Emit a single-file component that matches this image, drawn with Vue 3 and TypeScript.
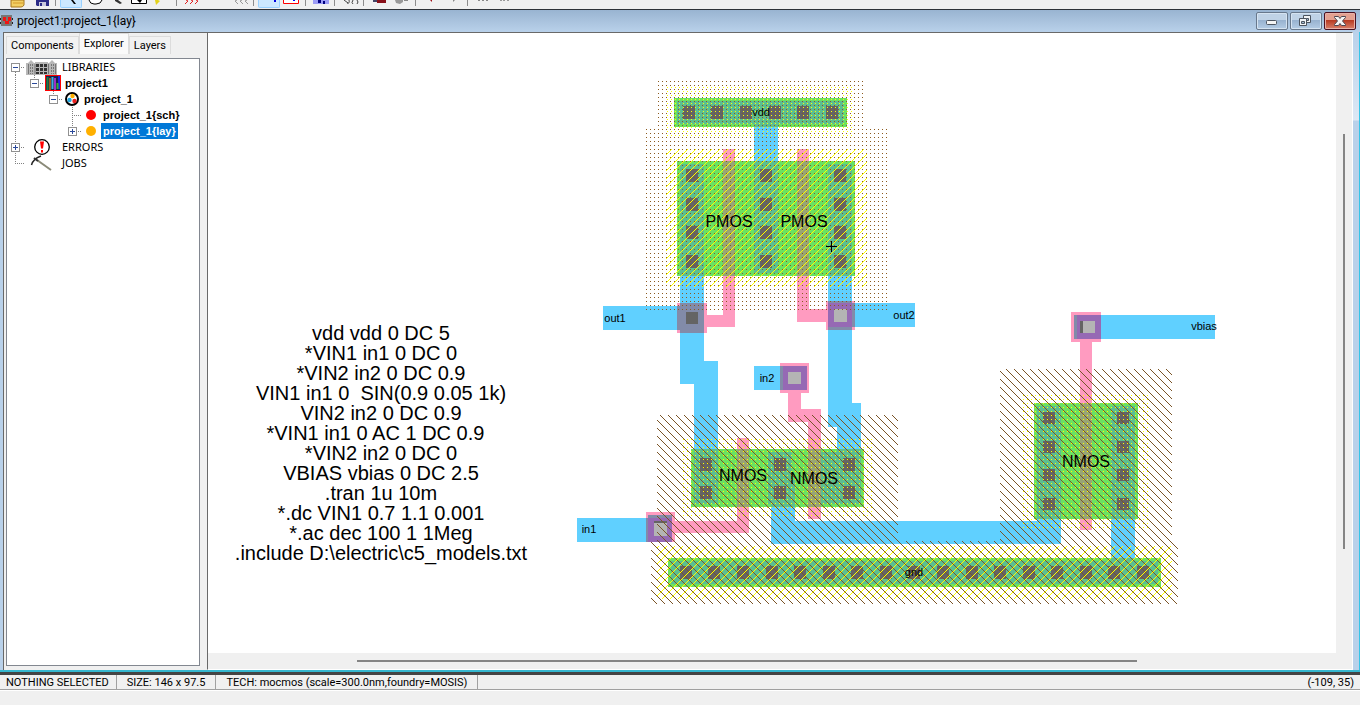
<script setup lang="ts">
import { ref } from 'vue'

interface Tool { name: string; w: number; sep?: boolean; on?: boolean; art?: string }
interface Row {
  id: string; label: string; gutter: number; box?: number; open?: boolean
  icon: string; iconW: number; bold?: boolean; lines: string
}
type Rect = [number, number, number, number]

const s = (w = 5): Tool => ({ name: '', w, sep: true })
const tools: Tool[] = [
  { name: 'Open library', w: 24, art: '<path d="M4 0h13v5q-1 2-3 2H4z" fill="#f2cf63" stroke="#a8761c"/><path d="M6 3h10" stroke="#d69a2a"/>' },
  { name: 'Save library', w: 23, art: '<path d="M5 0h13v6H6l-1-1z" fill="#2b2b86"/><path d="M8 2h7v4H8z" fill="#c9c9dd"/><path d="M9 3h2v3H9z" fill="#2b2b86"/>' },
  s(),
  { name: 'Click, zoom, wire', w: 25, on: true, art: '<path d="M10 0h2l3 4h-2z" fill="#000"/>' },
  { name: 'Pan', w: 23, art: '<path d="M5 0q1 4 5 4h2q5 0 6-4" fill="#fff" stroke="#000"/>' },
  { name: 'Zoom', w: 22, art: '<path d="M9 0h3l4 3-2 1-5-3z" fill="#333"/>' },
  { name: 'Outline', w: 22, art: '<path d="M3.500 0v3.500h15V0" fill="#fff" stroke="#000"/><path d="M9 0h5l-2 3z" fill="#000"/>' },
  { name: 'Measure', w: 24, art: '<path d="M4 0h3l2 1-4 4z" fill="#e3d21a"/>' },
  s(),
  { name: 'Objects', w: 25, art: '<path d="M5 0l2 1-3 3M10 0l2 1-3 3M15 0l2 1-3 3" fill="none" stroke="#e02020"/>' },
  { name: 'Grid', w: 24 },
  { name: 'Area', w: 23, art: '<path d="M8 0l-2 1 3 3M13 0l-2 1 3 3M18 0l-2 1 3 3" fill="none" stroke="#999"/>' },
  s(),
  { name: 'Select objects', w: 25, on: true, art: '<path d="M15 0h2v2h-2z" fill="#0000e0"/>' },
  { name: 'Select area', w: 22, art: '<path d="M2.500 0v3.500h15V0" fill="#fff" stroke="#f00"/><path d="M12 0h2v1h-2z" fill="#00f"/>' },
  s(),
  { name: 'Special select', w: 24, art: '<path d="M4 0h16v4H4z" fill="#9c9cf5"/><path d="M9 0h3v3H9zM14 1h2v3h-2z" fill="#000080"/>' },
  s(),
  { name: 'Preferences', w: 24, art: '<path d="M6 0l4 3M11 0q1 4-2 3M15 0q-2 3 0 4M19 0q2 2 0 4" fill="none" stroke="#444"/>' },
  s(),
  { name: 'Undo', w: 24, art: '<path d="M6 0h5v2H6z" fill="#446"/><path d="M10 0h9v3h-9z" fill="#880f18"/>' },
  { name: 'Redo', w: 23, art: '<path d="M4 0h8v2l-3 2-4-1z" fill="#999"/><path d="M13 0h4v1h-4z" fill="#888"/>' },
  s(),
  { name: 'Back', w: 24, art: '<path d="M11 0h2v2z" fill="#a01018"/>' },
  { name: 'Forward', w: 23, art: '<path d="M10 0h2l-2 2z" fill="#888"/>' },
  s(),
  { name: 'Expand', w: 24, art: '<path d="M8 0v1M12 0v1M16 0v1" stroke="#888" stroke-width="2"/>' },
  { name: 'Collapse', w: 22, art: '<path d="M7 0v1M10 0v1M14 0v1" stroke="#444"/>' },
]

const rows: Row[] = [
  { id: 'lib', label: 'LIBRARIES', gutter: 19, box: 4, open: true, icon: 'library', iconW: 31, lines: 'M14 8.500h4M8.500 13v3' },
  { id: 'p1', label: 'project1', gutter: 38, box: 23, open: true, icon: 'books', iconW: 16, bold: true, lines: 'M33 8.500h4M8.500 0v16M27.500 0v4' },
  { id: 'cell', label: 'project_1', gutter: 57, box: 42, open: true, icon: 'cell', iconW: 16, bold: true, lines: 'M52 8.500h4M8.500 0v16M46.500 0v4' },
  { id: 'sch', label: 'project_1{sch}', gutter: 76, icon: 'red', iconW: 16, bold: true, lines: 'M65 8.500h10M8.500 0v16M65.500 0v16' },
  { id: 'lay', label: 'project_1{lay}', gutter: 76, box: 61, icon: 'amber', iconW: 16, bold: true, lines: 'M71 8.500h4M8.500 0v16M65.500 0v4' },
  { id: 'err', label: 'ERRORS', gutter: 19, box: 4, icon: 'error', iconW: 31, lines: 'M14 8.500h4M8.500 0v16' },
  { id: 'jobs', label: 'JOBS', gutter: 19, icon: 'jobs', iconW: 31, lines: 'M8.500 0v8M8 8.500h9' },
]
const selected = ref('lay')
const tabs = ['Components', 'Explorer', 'Layers']
const tab = ref('Explorer')

const metal: Rect[] = [
  [754, 127, 24, 34], [680, 276, 24, 108], [603, 306, 101, 24], [694, 361, 24, 90],
  [828, 276, 24, 151], [828, 303, 87, 24], [837, 403, 24, 48], [754, 366, 53, 24],
  [577, 518, 95, 24], [771, 505, 24, 39], [771, 521, 290, 23], [1037, 517, 24, 27],
  [1111, 517, 24, 44], [1074, 315, 141, 24],
]
const poly: Rect[] = [
  [723, 149, 12, 178], [707, 315, 28, 12], [797, 149, 12, 173], [797, 309, 30, 13],
  [677, 303, 30, 30], [826, 301, 29, 29], [780, 363, 29, 30], [788, 393, 13, 29],
  [788, 409, 33, 13], [808, 409, 13, 110], [737, 438, 12, 95], [675, 521, 74, 12],
  [646, 512, 29, 30], [1071, 312, 30, 30], [1080, 342, 12, 188],
]
const active: Rect[] = [
  [674, 98, 173, 29], [677, 161, 178, 115], [691, 449, 173, 58], [1034, 403, 104, 116], [668, 558, 493, 29],
]
const gate: Rect[] = [
  [723, 161, 12, 115], [797, 161, 12, 115], [737, 449, 12, 58], [808, 449, 13, 58], [1080, 403, 12, 116],
]
const contactMetal: Rect[] = [
  [677, 101, 167, 23], [754, 124, 24, 3], [680, 164, 24, 112], [754, 161, 24, 112], [828, 164, 24, 112],
  [694, 449, 24, 55], [768, 452, 24, 52], [771, 480, 24, 27], [821, 452, 40, 52], [837, 449, 24, 4],
  [1037, 406, 24, 113], [1111, 406, 24, 113], [671, 561, 487, 23], [1111, 558, 24, 3],
]
const mixed: Rect[] = [
  [680, 303, 24, 30], [677, 306, 27, 24], [828, 301, 24, 29], [828, 303, 27, 24],
  [780, 366, 27, 24], [648, 515, 24, 27], [646, 518, 26, 24], [1074, 315, 27, 24],
]
const via: Rect[] = [[828, 303, 24, 24], [783, 366, 24, 24], [648, 518, 24, 24], [1077, 315, 24, 24]]
const grid = (xs: number[], ys: number[], h = 13): Rect[] =>
  xs.flatMap((x) => ys.map((y): Rect => [x, y, 12, h]))
const cuts: Rect[] = [
  ...grid([683, 711, 740, 769, 797, 826], [106]),
  ...grid([686, 760, 834], [169, 198, 226, 255]),
  ...grid([700, 774, 843], [458, 486]),
  ...grid([1043, 1117], [412, 441, 469, 498], 12),
  ...grid([680, 708, 737, 766, 794, 823, 851, 880, 908, 937, 966, 994, 1023, 1051, 1080, 1108, 1137], [566]),
  [686, 312, 12, 12], [654, 521, 13, 3], [1080, 321, 3, 12],
]
const viaCuts: Rect[] = [[834, 309, 13, 13], [788, 372, 13, 12], [654, 523, 13, 13], [1083, 321, 12, 12]]

const layers = [
  { color: '#60d0ff', shapes: metal }, { color: '#ff9bc0', shapes: poly }, { color: '#6be260', shapes: active },
  { color: '#98a574', shapes: gate }, { color: '#5cbf90', shapes: contactMetal }, { color: '#828ba9', shapes: mixed },
  { color: '#9669b4', shapes: via }, { color: '#646464', shapes: cuts }, { color: '#b4b4b4', shapes: viaCuts },
]
const fills: { pattern: string; r: Rect }[] = [
  { pattern: 'well', r: [658, 81, 205, 46] }, { pattern: 'well', r: [646, 127, 241, 183] },
  { pattern: 'nsel', r: [666, 85, 189, 54] }, { pattern: 'psel', r: [666, 149, 201, 138] },
  { pattern: 'pwell', r: [657, 415, 241, 129] }, { pattern: 'pwell', r: [1000, 369, 172, 175] },
  { pattern: 'pwell', r: [651, 541, 527, 63] }, { pattern: 'psel', r: [657, 546, 515, 53] },
  { pattern: 'nsel', r: [682, 438, 192, 81] }, { pattern: 'nsel', r: [1023, 395, 125, 135] },
]
const spice = [
  'vdd vdd 0 DC 5', '*VIN1 in1 0 DC 0', '*VIN2 in2 0 DC 0.9', 'VIN1 in1 0  SIN(0.9 0.05 1k)', 'VIN2 in2 0 DC 0.9',
  '*VIN1 in1 0 AC 1 DC 0.9  ', '*VIN2 in2 0 DC 0', 'VBIAS vbias 0 DC 2.5', '.tran 1u 10m', '*.dc VIN1 0.7 1.1 0.001',
  '*.ac dec 100 1 1Meg', '.include D:\\electric\\c5_models.txt',
]
const devices = [
  { t: 'PMOS', x: 729, y: 227 }, { t: 'PMOS', x: 804, y: 227 }, { t: 'NMOS', x: 743, y: 481 },
  { t: 'NMOS', x: 814, y: 484 }, { t: 'NMOS', x: 1086, y: 467 },
]
const pins = [
  { t: 'vdd', x: 761, y: 116 }, { t: 'out1', x: 615, y: 322 }, { t: 'out2', x: 904, y: 319 }, { t: 'in2', x: 767, y: 382 },
  { t: 'in1', x: 589, y: 533 }, { t: 'vbias', x: 1204, y: 330 }, { t: 'gnd', x: 914, y: 576 },
]
</script>

<template>
  <div class="app">
    <div class="toolbar" role="toolbar" aria-label="Tools">
      <template v-for="(t, i) in tools" :key="i">
        <span v-if="t.sep" class="sep"></span>
        <button v-else class="tool" :class="{ on: t.on }" :aria-label="t.name" :style="{ width: t.w + 'px' }">
          <svg width="22" height="8" v-html="t.art ?? ''"></svg>
        </button>
      </template>
    </div>

    <header class="title">
      <svg class="chip" width="13" height="12" shape-rendering="crispEdges">
        <path d="M1 0h11v11H1z" fill="#777" /><path d="M0 3h1v2H0zM0 7h1v2H0zM12 3h1v2h-1zM12 7h1v2h-1z" fill="#222" />
        <path d="M3 2h3v4H3zM8 2h3v4H8zM5 6h4v3H5z" fill="#f01414" />
      </svg>
      <h1>project1:project_1{lay}</h1>
      <div class="winbtns">
        <button aria-label="Minimize">
          <svg width="30" height="16"><rect x="9.500" y="7.500" width="10" height="4" rx="1" fill="#f4f4f4" stroke="#4d5560" /></svg>
        </button>
        <button aria-label="Restore">
          <svg width="30" height="16" fill="#f0f3f6" stroke="#4d5560">
            <path d="M12.500 2.500h7v7h-7z" /><path d="M15.500 5.500h2v2h-2z" fill="#9fb8d2" />
            <path d="M8.500 5.500h7v7h-7z" /><path d="M10.500 8.500h3v2h-3z" fill="#9fb8d2" />
          </svg>
        </button>
        <button class="close" aria-label="Close">
          <svg width="30" height="16">
            <path d="M9.500 3.500h4l1.500 2 1.500-2h4v1l-3 3.500 3 3.500v1h-4l-1.500-2-1.500 2h-4v-1l3-3.500-3-3.500z" fill="#f4f4f4" stroke="#4d4550" />
          </svg>
        </button>
      </div>
    </header>

    <main class="body">
      <aside class="side">
        <div class="tabs" role="tablist">
          <button v-for="t in tabs" :key="t" role="tab" :aria-selected="tab === t" :class="{ cur: tab === t }" @click="tab = t">{{ t }}</button>
        </div>
        <ul class="tree">
          <li v-for="r in rows" :key="r.id">
            <svg :width="r.gutter" height="16" shape-rendering="crispEdges">
              <path :d="r.lines" stroke="#808080" stroke-dasharray="1 1" fill="none" />
              <g v-if="r.box !== undefined">
                <rect :x="r.box + 0.5" y="4.500" width="8" height="8" fill="#fff" stroke="#919191" />
                <path :d="`M${r.box + 2} 8.500h5` + (r.open ? '' : `M${r.box + 4.5} 6v5`)" stroke="#2b4a9a" />
              </g>
            </svg>
            <svg :width="r.iconW" height="16" class="icon">
              <g v-if="r.icon === 'library'">
                <path d="M0 4h2l3-3 3 3h1V3h13v1h1l3-3 3 3h2v12H0z" fill="#b8b8b8" />
                <path d="M4.500 5v10M6.500 5v10M25.500 5v10M27.500 5v10" stroke="#777" stroke-dasharray="2 1" />
                <path d="M11.500 5v10M15.500 5v10M19.500 5v10" stroke="#333" stroke-width="3" stroke-dasharray="3 1" />
                <path d="M2.500 5v10M9 5v10M22.500 5v10M29.500 5v10" stroke="#777" />
              </g>
              <g v-else-if="r.icon === 'books'">
                <path d="M0 0h16v16H0z" fill="#f00" /><path d="M1 1h14v14H1z" fill="#182050" />
                <path d="M2.500 2v13" stroke="#208040" stroke-width="2" /><path d="M5 3v12" stroke="#9a5a20" stroke-width="2" />
                <path d="M7.500 2v12" stroke="#40b0e0" stroke-width="2" /><path d="M10 3v12" stroke="#a030c0" stroke-width="2" />
                <path d="M14 1v13" stroke="#2020e0" stroke-width="2" /><path d="M12.500 8v6" stroke="#30b030" stroke-width="2" />
              </g>
              <g v-else-if="r.icon === 'cell'">
                <circle cx="8" cy="8" r="6" fill="#fff" stroke="#000" stroke-width="2" />
                <circle cx="8.500" cy="5" r="2.200" fill="#ffb000" /><circle cx="5.500" cy="9" r="2.200" fill="#20a8e0" />
                <circle cx="10.500" cy="10" r="2.200" fill="#e82020" />
              </g>
              <circle v-else-if="r.icon === 'red'" cx="8" cy="8" r="5" fill="#f00" />
              <circle v-else-if="r.icon === 'amber'" cx="8" cy="8" r="5" fill="#ffb000" />
              <g v-else-if="r.icon === 'error'">
                <circle cx="16" cy="8" r="7.300" fill="#fff" stroke="#000" stroke-width="1.300" />
                <path d="M14 2.500h4l-1 7h-2zM15 11h2v2.500h-2z" fill="#f00" />
              </g>
              <g v-else fill="none">
                <path d="M11 5L25 15" stroke="#8a8a78" stroke-width="2" /><path d="M5.500 10Q7 4 15 1" stroke="#222" stroke-width="1.500" />
                <path d="M8 3l4 3" stroke="#333" stroke-width="2" />
              </g>
            </svg>
            <button :class="{ bold: r.bold, sel: selected === r.id }" @click="selected = r.id">{{ r.label }}</button>
          </li>
        </ul>
      </aside>

      <section class="view">
        <svg class="canvas" viewBox="208 33 1128 620" preserveAspectRatio="xMidYMid meet" role="img" aria-label="Cell layout">
          <defs>
            <pattern id="well" width="8" height="4" patternUnits="userSpaceOnUse" fill="#8b5a1e">
              <path d="M2 1h1v1h-1zM6 1h1v1h-1z" />
            </pattern>
            <pattern id="nsel" width="4" height="4" patternUnits="userSpaceOnUse" fill="#ffff00">
              <path d="M3 3h1v1h-1z" />
            </pattern>
            <pattern id="psel" width="8" height="8" patternUnits="userSpaceOnUse" fill="#ffff00">
              <path d="M0 4h1v1h-1zM1 3h1v1h-1zM2 2h1v1h-1zM3 1h1v1h-1zM4 0h1v1h-1zM5 7h1v1h-1zM6 6h1v1h-1zM7 5h1v1h-1z" />
            </pattern>
            <pattern id="pwell" width="8" height="8" patternUnits="userSpaceOnUse" fill="#7a5427">
              <path d="M5 0h1v1h-1zM6 1h1v1h-1zM7 2h1v1h-1zM0 3h1v1h-1zM1 4h1v1h-1zM2 5h1v1h-1zM3 6h1v1h-1zM4 7h1v1h-1z" />
            </pattern>
          </defs>
          <g shape-rendering="crispEdges">
            <g v-for="(l, i) in layers" :key="i" :fill="l.color">
              <rect v-for="(r, j) in l.shapes" :key="j" :x="r[0]" :y="r[1]" :width="r[2]" :height="r[3]" />
            </g>
            <rect v-for="(f, i) in fills" :key="i" :fill="`url(#${f.pattern})`" :x="f.r[0]" :y="f.r[1]" :width="f.r[2]" :height="f.r[3]" />
            <path d="M826 246.500h11M831.500 241v11" stroke="#000" />
          </g>
          <g class="spice">
            <text v-for="(t, i) in spice" :key="i" x="381" :y="340 + i * 20">{{ t }}</text>
          </g>
          <g class="device"><text v-for="(d, i) in devices" :key="i" :x="d.x" :y="d.y">{{ d.t }}</text></g>
          <g class="pin"><text v-for="p in pins" :key="p.t" :x="p.x" :y="p.y">{{ p.t }}</text></g>
        </svg>
        <div class="vbar"><span></span></div>
        <div class="hbar"><span></span></div>
      </section>
      <div class="edge"></div>
    </main>

    <footer class="status">
      <span>NOTHING SELECTED</span><span>SIZE: 146 x 97.5</span><span>TECH: mocmos (scale=300.0nm,foundry=MOSIS)</span>
      <span class="pos">(-109, 35)</span>
    </footer>
    <div class="foot"></div>
  </div>
</template>

<style>
html, body, #app { height: 100%; }
body { margin: 0; overflow: hidden; }
</style>

<style scoped>
.app { height: 100vh; display: flex; flex-direction: column; font: 11px/14px Roboto, sans-serif; color: #000; background: #f0f0f0; box-sizing: border-box; border-bottom: 1px solid #fff; }
button { font: inherit; color: inherit; padding: 0; margin: 0; border: 0; background: none; }
svg { display: block; flex: none; }
.toolbar { height: 9px; flex: none; display: flex; padding-left: 6px; border-bottom: 1px solid #2e3238; overflow: hidden; }
.tool { flex: none; height: 9px; display: flex; justify-content: center; align-items: flex-start; }
.tool.on svg { background: #cce8ff; border: solid #99d1ff; border-width: 0 1px 1px; box-sizing: border-box; border-radius: 0 0 2px 2px; }
.sep { flex: none; width: 1px; height: 6px; margin: 0 2px; background: #8c8c8c; }
.title { height: 22px; flex: none; display: flex; align-items: center; background: linear-gradient(#99b4d1, #b9d1ea); }
.chip { margin-right: 4px; }
.title h1 { margin: 0; font: 12px/16px Roboto, sans-serif; flex: 1; }
.winbtns { display: flex; gap: 2px; padding-right: 4px; }
.winbtns button { width: 32px; height: 18px; box-sizing: border-box; border: 1px solid #68788c; border-radius: 2px; box-shadow: inset 0 0 0 1px #d5e3f1; background: linear-gradient(#bfd2e6 45%, #98b2cf 46%, #b4cce5); }
.winbtns .close { border-color: #4a1020; box-shadow: inset 0 0 0 1px #e8b0a8; background: linear-gradient(#e4a090 45%, #b83a22 46%, #d8806a); }
.body { flex: 1; min-height: 0; display: flex; background: #b9d1ea; padding-left: 3px; border-bottom: 2px solid #35b7cf; }
.side { width: 204px; flex: none; box-sizing: border-box; display: flex; flex-direction: column; background: #f0f0f0; border-left: 1px solid #696969; border-top: 1px solid #696969; padding: 2px 7px 4px 2px; }
.tabs { display: flex; align-items: flex-end; height: 19px; padding-bottom: 3px; flex: none; }
.tabs button { height: 18px; padding: 0 4px; border: 1px solid #dcdcdc; border-bottom: 0; background: #f2f2f2; }
.tabs .cur { height: 21px; padding-bottom: 1px; background: #fafafa; }
.tree { flex: 1; margin: 1px 0 0; padding: 0; list-style: none; background: #fff; border: 1px solid #828790; }
.tree li { display: flex; height: 16px; }
.tree button { height: 16px; font: 11px/16px "Noto Sans", sans-serif; padding: 0 3px; margin-left: 2px; }
.tree .bold { font: bold 11px/17px "Liberation Sans", sans-serif; padding: 0 2px; }
.tree .sel { background: #0078d7; color: #fff; }
.view { flex: 1; min-width: 0; display: grid; grid-template-columns: 1fr 16px; grid-template-rows: 1fr 16px; background: #f0f0f0; border-left: 1px solid #696969; border-top: 1px solid #696969; border-right: 1px solid #fff; border-bottom: 1px solid #fff; }
.canvas { width: 100%; height: 100%; background: #fff; min-height: 0; overflow: hidden; }
.vbar { display: flex; justify-content: center; padding-top: 101px; }
.vbar span { width: 2px; height: 80%; max-height: 417px; background: #858585; }
.hbar { padding: 7px 0 0 149px; }
.hbar span { display: block; width: 80%; max-width: 780px; height: 2px; background: #858585; }
.edge { width: 7px; flex: none; box-sizing: border-box; border-right: 1px solid #35c5e8; background: linear-gradient(#b9d1ea, #dce8f5 88px, #b9d1ea 89px); }
.spice text, .device text, .pin text { font-family: "Liberation Sans", Arial, sans-serif; text-anchor: middle; white-space: pre; }
.spice text { font-size: 20px; }
.device text { font-size: 16px; }
.pin text { font-size: 11px; }
.status { flex: none; height: 14px; display: flex; border-top: 3px solid #444; border-bottom: 1px solid #a0a0a0; box-shadow: 0 1px #fff; line-height: 16px; }
.status span { padding: 0 10px; border-right: 1px solid #a0a0a0; }
.status span:first-child { padding: 0 7px 0 6px; }
.status .pos { margin-left: auto; border: 0; padding-right: 6px; }
.foot { flex: none; height: 15px; }
</style>
